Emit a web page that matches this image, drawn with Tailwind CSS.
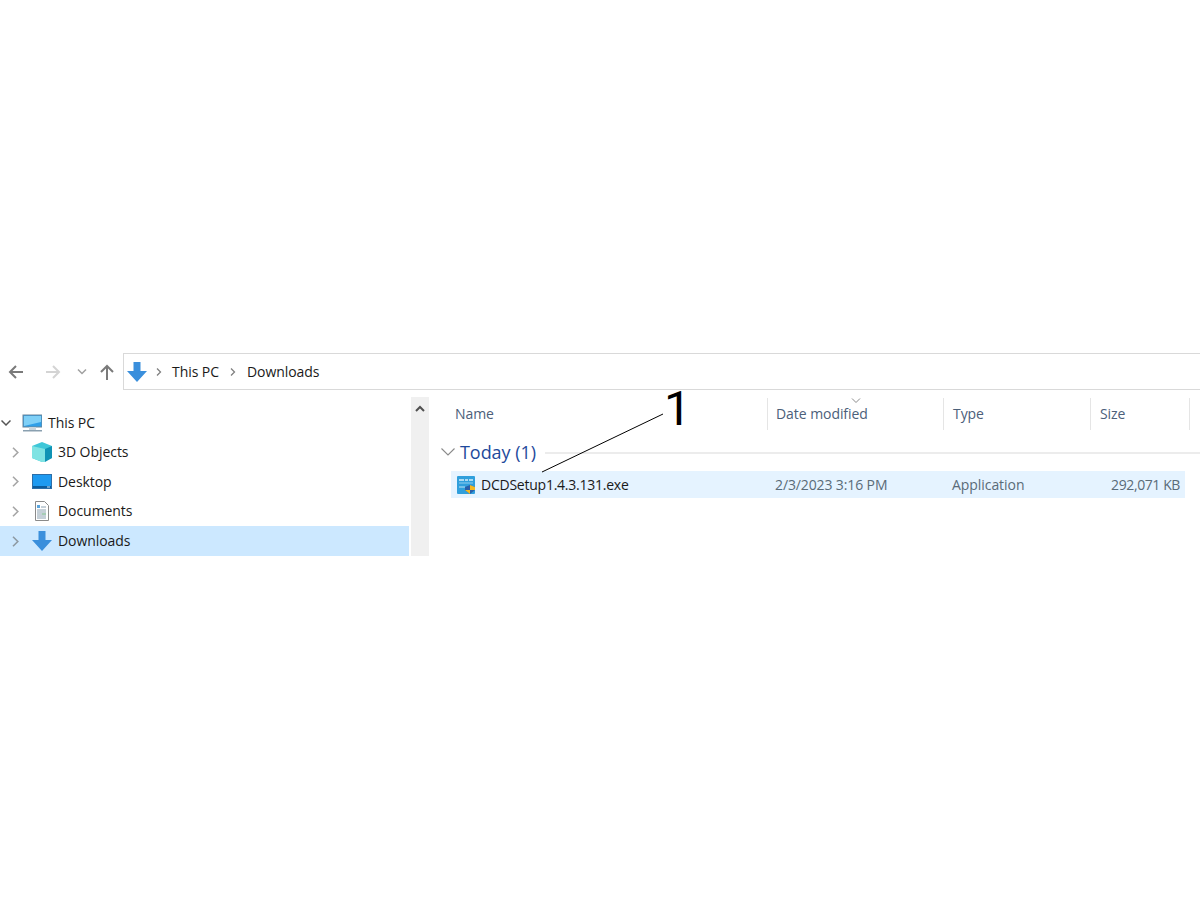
<!doctype html>
<html>
<head>
<meta charset="UTF-8" />
<script src="https://cdn.jsdelivr.net/npm/@tailwindcss/browser@4"></script>
</head>
<body class="bg-white h-[900px] overflow-hidden relative font-['Open_Sans',sans-serif] text-[14px] tracking-[-0.06px] text-[#1a1a1a]">
  <div class="h-[353px]"></div>

  <!-- Address row -->
  <div class="flex h-[37px] items-center">
    <div class="w-[123px] flex items-center shrink-0 relative h-full">
      <svg class="ml-[8px] w-[16px] h-[16px]" viewBox="0 0 16 16" fill="none" stroke="#7a7a7a" stroke-width="2"><path d="M15 8H2M8 2 2 8l6 6"/></svg>
      <svg class="ml-[21px] w-[16px] h-[16px]" viewBox="0 0 16 16" fill="none" stroke="#d4d4d4" stroke-width="2"><path d="M1 8h13M8 2l6 6-6 6"/></svg>
      <svg class="ml-[16px] w-[10px] h-[8px]" viewBox="0 0 10 8" fill="none" stroke="#a0a0a0" stroke-width="1.5"><path d="M1 1.500 5 5.500 9 1.500"/></svg>
      <svg class="ml-[12px] w-[16px] h-[16px]" viewBox="0 0 16 16" fill="none" stroke="#7a7a7a" stroke-width="2"><path d="M8 16V2M2 8l6-6 6 6"/></svg>
    </div>
    <div class="flex-1 h-full border border-[#d9d9d9] border-r-0 flex items-center">
      <svg class="ml-[3px] w-[20px] h-[20px]" viewBox="0 0 20 20"><path d="M6.500 0h7v9H20l-10 11L0 9h6.500z" fill="#3a8fdc"/></svg>
      <svg class="ml-[9px] w-[6px] h-[8px]" viewBox="0 0 6 8" fill="none" stroke="#808080" stroke-width="1.300"><path d="M1 .5 4.500 4 1 7.500"/></svg>
      <span class="ml-[10px] pb-[1px]">This PC</span>
      <svg class="ml-[11px] w-[6px] h-[8px]" viewBox="0 0 6 8" fill="none" stroke="#808080" stroke-width="1.300"><path d="M1 .5 4.500 4 1 7.500"/></svg>
      <span class="ml-[11px] pb-[1px]">Downloads</span>
    </div>
  </div>

  <div class="flex h-[159px] mt-[7px]">
    <!-- Nav tree -->
    <div class="w-[409px] shrink-0 pt-[11px]">
      <div class="flex items-center h-[29.5px]">
        <svg class="ml-[1px] w-[10px] h-[8px]" viewBox="0 0 10 8" fill="none" stroke="#555" stroke-width="1.500"><path d="M.5 1.500 5 6 9.500 1.500"/></svg>
        <svg class="ml-[11px] w-[20px] h-[20px]" viewBox="0 0 20 20"><rect x="1" y="2" width="19" height="12" fill="#2f9fe8" stroke="#6b8599"/><path d="M2 3h17v6L2 13z" fill="#7fd0f7"/><path d="M1 17h19v1.500H1z" fill="#8aa0b0"/><path d="M7 14h7v3H7z" fill="#c9d5dc"/></svg>
        <span class="ml-[6px]">This PC</span>
      </div>
      <div class="flex items-center h-[29.5px]">
        <svg class="ml-[12px] w-[7px] h-[11px]" viewBox="0 0 7 11" fill="none" stroke="#a6a6a6" stroke-width="1.600"><path d="M1 .8 5.800 5.500 1 10.200"/></svg>
        <svg class="ml-[13px] w-[20px] h-[20px]" viewBox="0 0 20 20"><path d="M10 0 20 4v12l-10 4L0 16V4z" fill="#3fc7d8"/><path d="M13 7 20 4v12l-7 4z" fill="#0f93b5"/><path d="M0 4l13 3v13l-3 0L0 16z" fill="#7fe3e3"/></svg>
        <span class="ml-[6px] pb-[1px]">3D Objects</span>
      </div>
      <div class="flex items-center h-[29.5px]">
        <svg class="ml-[12px] w-[7px] h-[11px]" viewBox="0 0 7 11" fill="none" stroke="#a6a6a6" stroke-width="1.600"><path d="M1 .8 5.800 5.500 1 10.200"/></svg>
        <svg class="ml-[13px] w-[20px] h-[20px]" viewBox="0 0 20 20"><rect x=".5" y="2.500" width="19" height="14" fill="#1e9af0" stroke="#2c6ea8"/><path d="M1 14h18v2H1z" fill="#0c5c9c"/><path d="M15 15h3" stroke="#cfe6f7"/></svg>
        <span class="ml-[6px]">Desktop</span>
      </div>
      <div class="flex items-center h-[29.5px]">
        <svg class="ml-[12px] w-[7px] h-[11px]" viewBox="0 0 7 11" fill="none" stroke="#a6a6a6" stroke-width="1.600"><path d="M1 .8 5.800 5.500 1 10.200"/></svg>
        <svg class="ml-[13px] w-[20px] h-[20px]" viewBox="0 0 20 20"><path d="M3.500.5h9l4 4v15h-13z" fill="#fff" stroke="#8a8a8a"/><path d="M5 4h3v3H5z" fill="#5aa5dd"/><path d="M9 6h5M5 9h9M5 11h9M5 13h5M5 15h9M5 17h9" stroke="#8aa0b0"/><path d="M10 13h4" stroke="#4c9a6a"/></svg>
        <span class="ml-[6px] pb-[1px]">Documents</span>
      </div>
      <div class="flex items-center h-[30px] bg-[#cce8ff]">
        <svg class="ml-[12px] w-[7px] h-[11px]" viewBox="0 0 7 11" fill="none" stroke="#8e9aa3" stroke-width="1.600"><path d="M1 .8 5.800 5.500 1 10.200"/></svg>
        <svg class="ml-[13px] w-[20px] h-[20px]" viewBox="0 0 20 20"><path d="M6.500 0h7v9H20l-10 11L0 9h6.500z" fill="#3a8fdc"/></svg>
        <span class="ml-[6px] pb-[1px]">Downloads</span>
      </div>
    </div>

    <!-- Scrollbar -->
    <div class="ml-[2px] w-[18px] bg-[#f0f0f0] shrink-0 flex justify-center pt-[8px]">
      <svg class="w-[10px] h-[7px]" viewBox="0 0 10 7" fill="none" stroke="#505050" stroke-width="2"><path d="M1 6 5 2l4 4"/></svg>
    </div>

    <!-- File list -->
    <div class="flex-1 text-[#4c607a]">
      <div class="flex h-[32px] items-center mt-[1px]">
        <div class="w-[339px] h-full flex items-center pl-[26px] pb-[1px] border-r border-[#e5e5e5]">Name</div>
        <div class="w-[176px] h-full flex items-center pl-[8px] pb-[1px] border-r border-[#e5e5e5] relative">
          Date modified
          <svg class="absolute left-[83px] top-[0px] w-[10px] h-[6px]" viewBox="0 0 10 6" fill="none" stroke="#8a8a8a"><path d="M1 .5 5 4.500 9 .5"/></svg>
        </div>
        <div class="w-[147px] h-full flex items-center pl-[9px] pb-[1px] border-r border-[#e5e5e5]">Type</div>
        <div class="w-[99px] h-full flex items-center pl-[9px] pb-[1px] border-r border-[#e5e5e5]">Size</div>
      </div>
      <div class="flex items-center h-[26px] mt-[9px] pl-[12px]">
        <svg class="w-[14px] h-[8px]" viewBox="0 0 14 8" fill="none" stroke="#8a8a8a" stroke-width="1.100"><path d="M.5.5 7 7 13.500.5"/></svg>
        <span class="ml-[5px] text-[18px] tracking-[-0.05px] text-[#1e4a9c]">Today (1)</span>
        <div class="flex-1 h-[2px] bg-[#ececec] ml-[9px] mt-[2px]"></div>
      </div>
      <div class="flex items-center h-[27px] w-[734px] ml-[22px] mt-[6px] pb-[1px] bg-[#e5f3ff] text-[#5a6b78]">
        <svg class="ml-[6px] mt-[1px] w-[18px] h-[18px] shrink-0" viewBox="0 0 18 18"><rect x="0" y="0" width="18" height="18" rx="1" fill="#2f9fdc"/><path d="M2 4h5M8 4h3M12 4h4" stroke="#d5eef9" stroke-width="1.500"/><path d="M2 7h14" stroke="#8fcdee"/><path d="M2 11h6" stroke="#bfe3f5"/><path d="M8 11l5-2 5 2v3l-5 4-5-4z" fill="#2a5fa8"/><path d="M13 9l5 2v3h-5zM13 14v4l-5-4z" fill="#f5b820"/></svg>
        <span class="ml-[6px] w-[294px] text-[#1a1a1a] tracking-[-0.24px]">DCDSetup1.4.3.131.exe</span>
        <span class="w-[177px] tracking-[-0.12px]">2/3/2023 3:16 PM</span>
        <span class="w-[100px]">Application</span>
        <span class="w-[128px] text-right tracking-[-0.4px]">292,071 KB</span>
      </div>
    </div>
  </div>

  <!-- Callout -->
  <svg class="absolute left-[540px] top-[412px] w-[126px] h-[62px]" viewBox="0 0 126 62" fill="none" stroke="#000"><path d="M2 60 123 2"/></svg>
  <span class="absolute left-[664px] top-[381px] font-['Roboto',sans-serif] text-[48px] leading-[56px] text-black">1</span>
</body>
</html>
